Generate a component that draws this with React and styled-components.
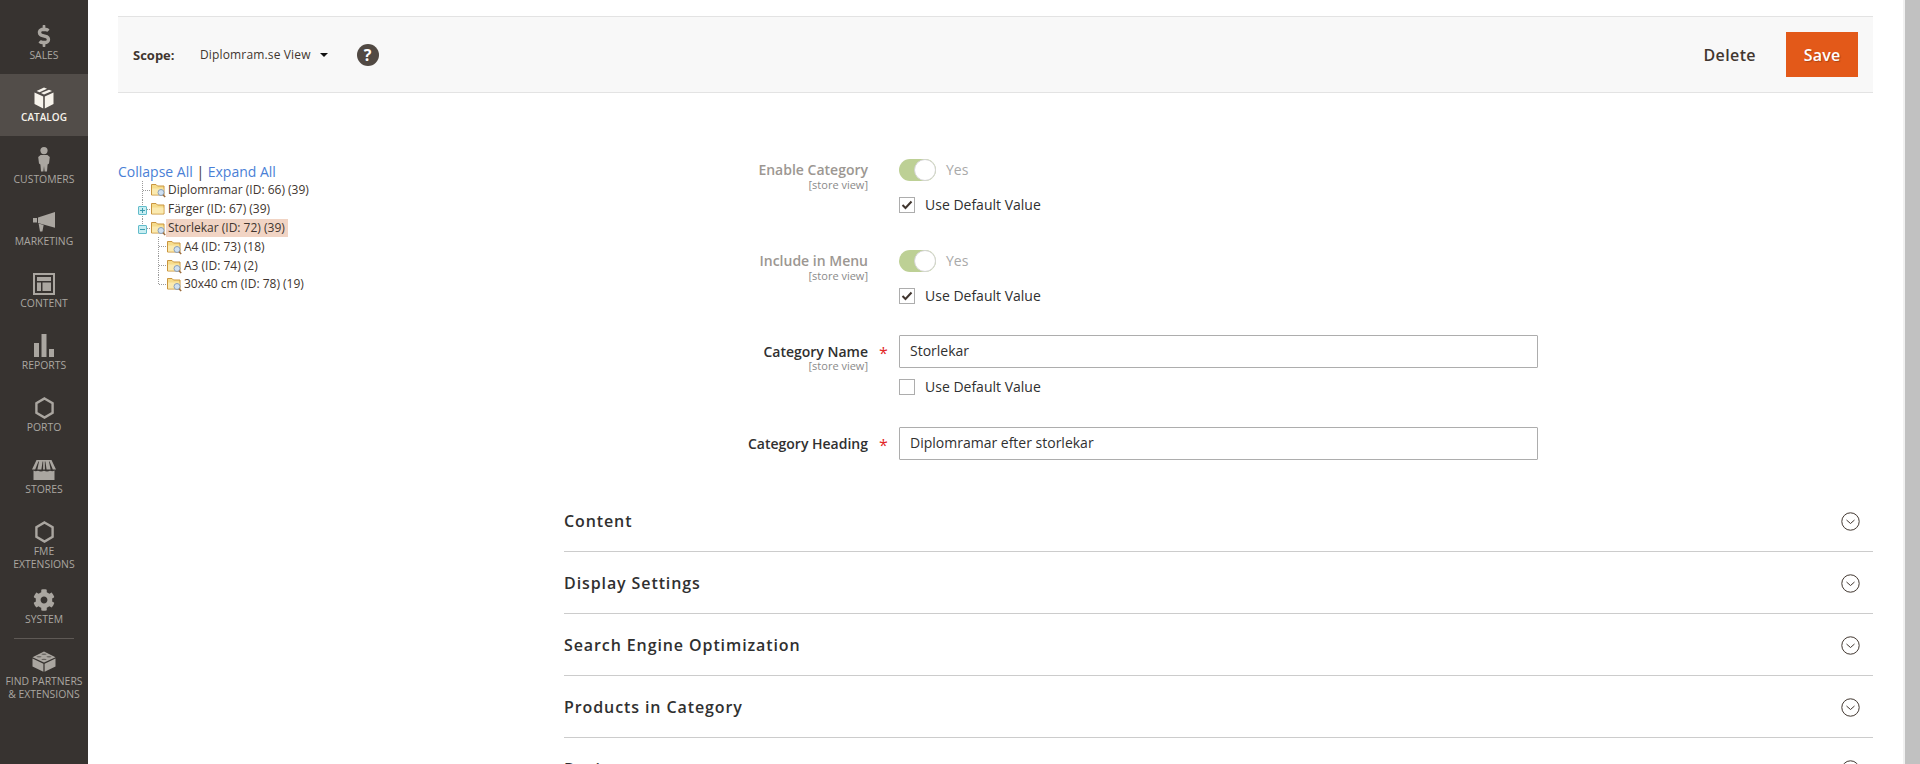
import React from 'react';
import styled, { createGlobalStyle } from 'styled-components';
import { FaDollarSign, FaCog } from 'react-icons/fa';

const GlobalStyle = createGlobalStyle`
	html, body {
		margin: 0;
		height: 100%;
		overflow: hidden;
		background: #fff;
		font-family: 'Open Sans', 'Liberation Sans', sans-serif;
		color: #303030;
	}
`;

const Page = styled.div`
	display: flex;
	height: 764px;
	overflow: hidden;
`;

/* side menu */
const Sidebar = styled.nav`
	flex: 0 0 88px;
	background: #373330;
	padding-top: 12px;
	box-sizing: border-box;
`;

const MenuItem = styled.div`
	height: ${(p) => p.$height || 62}px;
	padding-top: 11px;
	box-sizing: border-box;
	text-align: center;
	color: ${(p) => (p.$active ? '#f7f3eb' : '#aaa6a0')};
	background: ${(p) => (p.$active ? '#524d49' : 'transparent')};
`;

const MenuIcon = styled.div`
	height: 25px;
	display: flex;
	align-items: center;
	justify-content: center;
	color: ${(p) => (p.$active ? '#f7f3eb' : '#aaa6a0')};
`;

const MenuLabel = styled.div`
	margin-top: 1px;
	font-size: ${(p) => (p.$active ? 10 : 10.4)}px;
	line-height: 13px;
	text-transform: uppercase;
	font-weight: ${(p) => (p.$active ? 600 : 400)};
	white-space: pre-line;
`;

const MenuDivider = styled.div`
	height: 1px;
	margin: 6px 14px -1px;
	background: #5e5955;
`;

const BoxIcon = () => (
	<svg width='20' height='22' viewBox='0 0 20 22' fill='currentColor'>
		<path d='M10 0.5 L13 1.8 L5.6 5.2 L2.6 3.9 Z' />
		<path d='M15 2.7 L18 4 L10 7.4 L7 6.1 Z' />
		<path d='M0.5 5.6 L9.2 9.4 V21.5 L0.5 17 Z' />
		<path d='M19.5 5.6 L10.8 9.4 V21.5 L19.5 17 Z' />
	</svg>
);

const PersonIcon = () => (
	<svg width='12' height='25' viewBox='0 0 12 25' fill='currentColor'>
		<circle cx='6' cy='3.6' r='3.6' />
		<path d='M2.6 8 H9.4 L11.8 10 L11 16.5 L9.6 17.5 L9 24.5 H6.6 L6 19 L5.4 24.5 H3 L2.4 17.5 L1 16.5 L0.2 10 Z' />
	</svg>
);

const MegaphoneIcon = () => (
	<svg width='23' height='20' viewBox='0 0 23 20' fill='currentColor'>
		<path d='M0 6 H4 V10.5 H0 Z' />
		<path d='M5 5.6 L22 0 V15.8 L5 11 Z' />
		<path d='M5.6 11.6 L10.6 13 L9.4 19.6 L7 19.6 Z' />
	</svg>
);

const LayoutIcon = () => (
	<svg width='22' height='22' viewBox='0 0 22 22' fill='currentColor'>
		<path fillRule='evenodd' d='M0 0 H22 V22 H0 Z M2 2 V20 H20 V2 Z' />
		<path d='M4 4 H18 V8 H4 Z M4 9.5 H8 V18 H4 Z M9.5 9.5 H18 V18 H9.5 Z' />
	</svg>
);

const BarsIcon = () => (
	<svg width='20' height='23' viewBox='0 0 20 23' fill='currentColor'>
		<path d='M0 9 H5 V23 H0 Z M7.5 0 H12.5 V23 H7.5 Z M15 15 H20 V23 H15 Z' />
	</svg>
);

const HexIcon = () => (
	<svg width='19' height='22' viewBox='0 0 19 22' fill='none' stroke='currentColor' strokeWidth='2.4'>
		<path d='M9.5 1.5 L17.6 6.2 V15.8 L9.5 20.5 L1.4 15.8 V6.2 Z' />
	</svg>
);

const StoreIcon = () => (
	<svg width='24' height='20' viewBox='0 0 24 20' fill='currentColor'>
		<path d='M4.5 0 H19.5 L24 9.6 H20.8 L17.6 1.6 H17 L18.6 9.6 H14.6 L13.4 1.6 H12.8 L12.9 9.6 H11.1 L11.2 1.6 H10.6 L9.4 9.6 H5.4 L7 1.6 H6.4 L3.2 9.6 H0 Z' />
		<path d='M1.5 10.6 Q3.5 11.8 6 10.8 Q9 12 12 10.8 Q15 12 18 10.8 Q20.5 11.8 22.5 10.6 V20 H1.5 Z' />
	</svg>
);

const BrickIcon = () => (
	<svg width='24' height='21' viewBox='0 0 24 21' fill='currentColor'>
		<path d='M12 0.5 L23.5 6.2 L12 11.6 L0.5 6.2 Z' />
		<path d='M0.5 7.6 L11.4 12.8 V20.8 L0.5 15.4 Z' />
		<path d='M23.5 7.6 L12.6 12.8 V20.8 L23.5 15.4 Z' />
		<g fill='#373330' opacity='0.55'>
			<ellipse cx='12' cy='3.2' rx='2.6' ry='0.7' />
			<ellipse cx='7' cy='5.8' rx='2.6' ry='0.7' />
			<ellipse cx='17' cy='5.8' rx='2.6' ry='0.7' />
			<ellipse cx='12' cy='8.4' rx='2.6' ry='0.7' />
		</g>
	</svg>
);

const menu = [
	{ label: 'Sales', icon: <FaDollarSign size={22} /> },
	{ label: 'Catalog', icon: <BoxIcon />, active: true },
	{ label: 'Customers', icon: <PersonIcon /> },
	{ label: 'Marketing', icon: <MegaphoneIcon /> },
	{ label: 'Content', icon: <LayoutIcon /> },
	{ label: 'Reports', icon: <BarsIcon /> },
	{ label: 'Porto', icon: <HexIcon /> },
	{ label: 'Stores', icon: <StoreIcon /> },
	{ label: 'FME\nExtensions', icon: <HexIcon />, height: 68 },
	{ label: 'System', icon: <FaCog size={22} />, height: 56 },
];

const SideMenu = () => (
	<Sidebar>
		{menu.map((item) => (
			<MenuItem key={item.label} $active={item.active} $height={item.height}>
				<MenuIcon $active={item.active}>{item.icon}</MenuIcon>
				<MenuLabel $active={item.active}>{item.label}</MenuLabel>
			</MenuItem>
		))}
		<MenuDivider />
		<MenuItem $height={68}>
			<MenuIcon>
				<BrickIcon />
			</MenuIcon>
			<MenuLabel>{'Find Partners\n& Extensions'}</MenuLabel>
		</MenuItem>
	</Sidebar>
);

/* top bar */
const Main = styled.main`
	flex: 1;
	min-width: 0;
	padding: 16px 30px 0;
`;

const Toolbar = styled.div`
	height: 77px;
	box-sizing: border-box;
	display: flex;
	align-items: center;
	padding: 0 15px;
	background: #f8f8f8;
	border-top: 1px solid #e3e3e3;
	border-bottom: 1px solid #e3e3e3;
`;

const ScopeLabel = styled.span`
	font-size: 13px;
	font-weight: 700;
	color: #41362f;
	width: 67px;
`;

const ScopeValue = styled.span`
	font-size: 12px;
	letter-spacing: 0.15px;
	color: #41362f;
	display: flex;
	align-items: center;
`;

const Caret = styled.i`
	width: 0;
	height: 0;
	margin-left: 9px;
	border-left: 4px solid transparent;
	border-right: 4px solid transparent;
	border-top: 4px solid #111;
`;

const Help = styled.span`
	width: 22px;
	height: 22px;
	margin-left: 29px;
	border-radius: 50%;
	background: #514943;
	color: #fff;
	font-size: 16px;
	font-weight: 700;
	line-height: 22px;
	text-align: center;
`;

const Delete = styled.span`
	margin-left: auto;
	margin-right: 30px;
	font-size: 16px;
	font-weight: 600;
	letter-spacing: 0.4px;
	color: #41362f;
`;

const Save = styled.button`
	width: 72px;
	height: 45px;
	margin: 0;
	padding: 0;
	border: 0;
	background: #e35919;
	color: #fff;
	font: 600 16px 'Open Sans', sans-serif;
	letter-spacing: 0.2px;
	text-shadow: 1px 1px 1px rgba(0, 0, 0, 0.25);
`;

/* category tree */
const Columns = styled.div`
	display: flex;
`;

const TreeColumn = styled.aside`
	flex: 0 0 446px;
	padding-top: 70px;
`;

const TreeLinks = styled.div`
	font-size: 14px;
	line-height: 18px;
	color: #41362f;
	a {
		color: #4a7fd6;
		text-decoration: none;
	}
`;

const TreeRow = styled.div`
	display: flex;
	align-items: center;
	height: 18.8px;
	margin-left: ${(p) => (p.$level ? 36 : 20)}px;
`;

const Slot = styled.span`
	position: relative;
	flex: 0 0 12px;
	height: 19px;
	&::before {
		content: '';
		position: absolute;
		left: 4px;
		top: 0;
		height: ${(p) => (p.$last ? '50%' : '100%')};
		border-left: 1px dotted #9a9a9a;
	}
	&::after {
		content: '';
		position: absolute;
		left: 5px;
		top: 9px;
		width: 7px;
		border-top: 1px dotted #9a9a9a;
	}
`;

const Expander = styled.span`
	position: absolute;
	z-index: 1;
	left: 0;
	top: 6px;
	width: 7px;
	height: 7px;
	border: 1px solid #62bccb;
	border-radius: 1px;
	background: #c9eef2;
	&::before {
		content: '';
		position: absolute;
		left: 1px;
		right: 1px;
		top: 3px;
		height: 1px;
		background: #3b9cae;
	}
	&::after {
		content: '';
		display: ${(p) => (p.$open ? 'none' : 'block')};
		position: absolute;
		top: 1px;
		bottom: 1px;
		left: 3px;
		width: 1px;
		background: #3b9cae;
	}
`;

const TreeName = styled.span`
	margin-left: 0;
	padding: 0 3px 0 2px;
	font-size: 12px;
	line-height: 18px;
	white-space: nowrap;
	color: #41362f;
	background: ${(p) => (p.$selected ? '#f1d4c4' : 'transparent')};
`;

const Folder = ({ search }) => (
	<svg width='16' height='16' viewBox='0 0 16 16' style={{ flex: '0 0 16px' }}>
		<path d='M1.5 2.5 H6 L7.5 4 H14 V13 H1.5 Z' fill='#f6dc8c' stroke='#c9953f' />
		<path d='M2 6.5 H13.5 V12.5 H2 Z' fill='#fbeab0' />
		{search && (
			<g>
				<circle cx='11' cy='10.5' r='3' fill='#cfe0f2' stroke='#8a9fb8' />
				<path d='M13 12.8 L15.2 15' stroke='#9a6a3a' strokeWidth='1.5' />
			</g>
		)}
	</svg>
);

const tree = [
	{ name: 'Diplomramar (ID: 66) (39)', search: true },
	{ name: 'Färger (ID: 67) (39)', expander: 'plus' },
	{ name: 'Storlekar (ID: 72) (39)', expander: 'minus', search: true, selected: true, last: true },
	{ name: 'A4 (ID: 73) (18)', level: 1, search: true },
	{ name: 'A3 (ID: 74) (2)', level: 1, search: true },
	{ name: '30x40 cm (ID: 78) (19)', level: 1, search: true, last: true },
];

const CategoryTree = () => (
	<TreeColumn>
		<TreeLinks>
			<a href='#collapse'>Collapse All</a> | <a href='#expand'>Expand All</a>
		</TreeLinks>
		{tree.map((node) => (
			<TreeRow key={node.name} $level={node.level}>
				<Slot $last={node.last}>
					{node.expander && <Expander $open={node.expander === 'minus'} />}
				</Slot>
				<Folder search={node.search} />
				<TreeName $selected={node.selected}>{node.name}</TreeName>
			</TreeRow>
		))}
	</TreeColumn>
);

/* form */
const FormColumn = styled.section`
	flex: 1;
	min-width: 0;
	padding-top: 60px;
`;

const Field = styled.div`
	display: grid;
	grid-template-columns: 304px 31px 1fr;
	margin-bottom: 31px;
`;

const LabelCell = styled.div`
	text-align: right;
`;

const LabelText = styled.div`
	font-size: 14px;
	font-weight: 600;
	line-height: ${(p) => (p.$disabled ? 34 : 33)}px;
	color: ${(p) => (p.$disabled ? '#9c9792' : '#303030')};
`;

const ScopeHint = styled.div`
	margin-top: -8px;
	font-size: 11px;
	line-height: 12px;
	color: #8a8a8a;
`;

const Star = styled.span`
	height: 33px;
	text-align: center;
	font-size: 16px;
	line-height: 36px;
	color: #e22626;
`;

const SwitchRow = styled.div`
	height: 34px;
	display: flex;
	align-items: center;
`;

const Toggle = styled.span`
	display: flex;
	justify-content: flex-end;
	width: 37px;
	height: 22px;
	border-radius: 11px;
	background: #bdd095;
`;

const Knob = styled.span`
	width: 22px;
	height: 22px;
	box-sizing: border-box;
	border: 1px solid #d4d4d4;
	border-radius: 50%;
	background: #fff;
`;

const YesText = styled.span`
	margin-left: 10px;
	font-size: 14px;
	line-height: 20px;
	color: #a9a9a9;
`;

const TextInput = styled.input`
	display: block;
	width: 639px;
	height: 33px;
	box-sizing: border-box;
	padding: 0 10px 2px;
	border: 1px solid #adadad;
	border-radius: 1px;
	outline: 0;
	font: 400 14px 'Open Sans', sans-serif;
	color: #303030;
`;

const CheckRow = styled.div`
	display: flex;
	align-items: center;
	height: 16px;
	margin: ${(p) => (p.$input ? '11px 0 1px' : '10px 0 0')};
`;

const CheckBox = styled.span`
	display: flex;
	align-items: center;
	justify-content: center;
	width: 16px;
	height: 16px;
	box-sizing: border-box;
	border: 1px solid #adadad;
	background: #fff;
`;

const CheckText = styled.span`
	margin-left: 10px;
	font-size: 14px;
	line-height: 16px;
	color: #303030;
`;

const Tick = () => (
	<svg width='12' height='10' viewBox='0 0 12 10' fill='none' stroke='#41362f' strokeWidth='2'>
		<path d='M1.5 5 L4.5 8 L10.5 1.5' />
	</svg>
);

const UseDefault = ({ checked, input }) => (
	<CheckRow $input={input}>
		<CheckBox>{checked && <Tick />}</CheckBox>
		<CheckText>Use Default Value</CheckText>
	</CheckRow>
);

const SwitchField = ({ label }) => (
	<Field>
		<LabelCell>
			<LabelText $disabled>{label}</LabelText>
			<ScopeHint>[store view]</ScopeHint>
		</LabelCell>
		<span />
		<div>
			<SwitchRow>
				<Toggle>
					<Knob />
				</Toggle>
				<YesText>Yes</YesText>
			</SwitchRow>
			<UseDefault checked />
		</div>
	</Field>
);

/* collapsible sections */
const Sections = styled.div`
	margin-top: -1px;
`;

const Section = styled.div`
	display: flex;
	align-items: center;
	justify-content: space-between;
	height: 62px;
	box-sizing: border-box;
	padding-right: 13px;
	border-bottom: 1px solid #cccccc;
`;

const SectionTitle = styled.span`
	font-size: 16px;
	font-weight: 600;
	letter-spacing: 0.9px;
	color: #303030;
`;

const ChevronSvg = styled.svg`
	margin-top: 2px;
`;

const ChevronCircle = () => (
	<ChevronSvg width='19' height='19' viewBox='0 0 19 19' fill='none' stroke='#41362f'>
		<circle cx='9.5' cy='9.5' r='8.7' />
		<path d='M5.5 8 L9.5 11.5 L13.5 8' />
	</ChevronSvg>
);

const sections = [
	'Content',
	'Display Settings',
	'Search Engine Optimization',
	'Products in Category',
	'Design',
];

const Scrollbar = styled.div`
	flex: 0 0 17px;
	box-sizing: border-box;
	padding-left: 2px;
	background: #f1f1f1;
	display: flex;
`;

const ScrollThumb = styled.div`
	flex: 1;
	background: #c1c1c1;
`;

const App = () => (
	<Page>
		<GlobalStyle />
		<SideMenu />
		<Main>
			<Toolbar>
				<ScopeLabel>Scope:</ScopeLabel>
				<ScopeValue>
					Diplomram.se View
					<Caret />
				</ScopeValue>
				<Help>?</Help>
				<Delete>Delete</Delete>
				<Save>Save</Save>
			</Toolbar>
			<Columns>
				<CategoryTree />
				<FormColumn>
					<SwitchField label='Enable Category' />
					<SwitchField label='Include in Menu' />
					<Field>
						<LabelCell>
							<LabelText>Category Name</LabelText>
							<ScopeHint>[store view]</ScopeHint>
						</LabelCell>
						<Star>*</Star>
						<div>
							<TextInput readOnly value='Storlekar' />
							<UseDefault input />
						</div>
					</Field>
					<Field>
						<LabelCell>
							<LabelText>Category Heading</LabelText>
						</LabelCell>
						<Star>*</Star>
						<TextInput readOnly value='Diplomramar efter storlekar' />
					</Field>
					<Sections>
						{sections.map((title) => (
							<Section key={title}>
								<SectionTitle>{title}</SectionTitle>
								<ChevronCircle />
							</Section>
						))}
					</Sections>
				</FormColumn>
			</Columns>
		</Main>
		<Scrollbar>
			<ScrollThumb />
		</Scrollbar>
	</Page>
);

export default App;
